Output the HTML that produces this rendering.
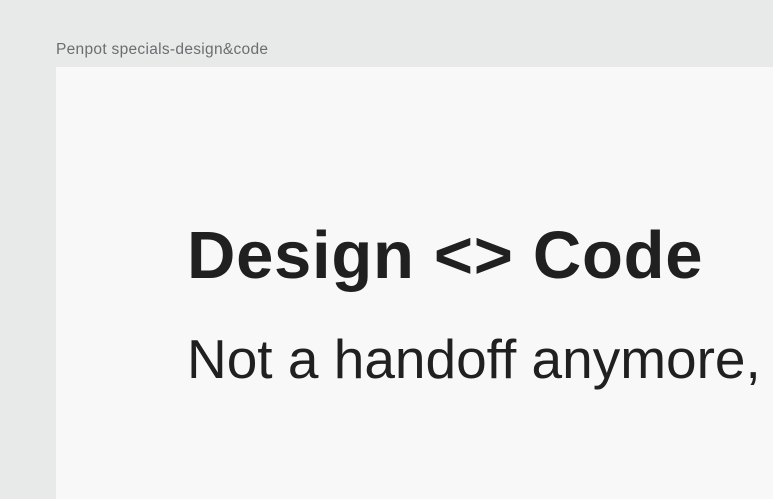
<!DOCTYPE html>
<html><head><meta charset="utf-8"><style>
html,body{margin:0;padding:0;width:773px;height:499px;overflow:hidden;background:#e8e9e9;font-family:"Liberation Sans",sans-serif;position:relative}
.cap{position:absolute;left:56px;top:41px;font-size:15.5px;color:#6b6e70;letter-spacing:0.3px;white-space:nowrap}
.frame{position:absolute;left:56px;top:67px;width:717px;height:432px;background:#f8f8f8;overflow:hidden}
.h1{position:absolute;left:131px;top:155px;font-size:67px;font-weight:bold;color:#202020;letter-spacing:0.7px;white-space:nowrap;line-height:1}
.h2{position:absolute;left:131px;top:265px;font-size:55px;color:#202020;white-space:nowrap;line-height:1}
</style></head><body>
<div class="cap">Penpot specials-design&amp;code</div>
<div class="frame">
<div class="h1">Design &lt;&gt; Code</div>
<div class="h2">Not a handoff anymore, just</div>
</div>
</body></html>
